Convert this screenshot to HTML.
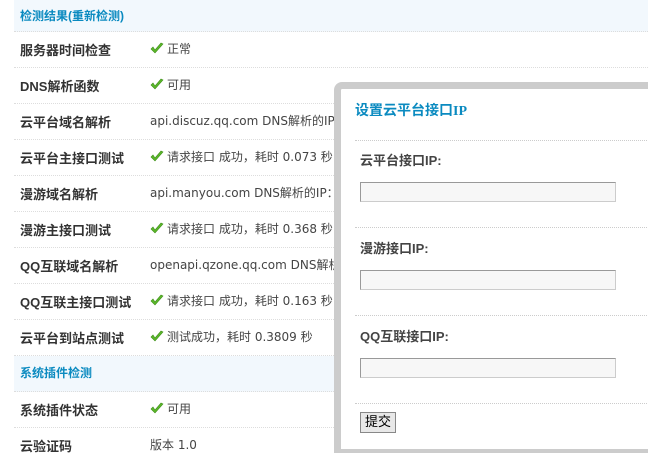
<!DOCTYPE html>
<html><head><meta charset="utf-8"><style>
body{margin:0;width:648px;height:453px;overflow:hidden;background:#fff;font-family:"DejaVu Sans","Noto Sans CJK SC",sans-serif;font-size:12px;color:#333;position:relative}
.row{position:absolute;left:14px;width:634px;height:35px;border-bottom:1px dotted #ddd}
.hd{background:#f2f8fd;color:#0a8ac0;font-weight:bold}
.l{position:absolute;left:6px;top:8px;font-weight:bold;font-family:"Liberation Sans","Noto Sans CJK SC",sans-serif;font-size:13px}
.hd .l{font-size:12px}
.v{position:absolute;left:136px;top:8px;white-space:nowrap;color:#444}
.ck{display:inline-block;width:14px;height:12px;vertical-align:-1px;margin-right:3px}
#dlg{position:absolute;left:334px;top:82px;width:330px;height:360px;background:#fff;border:7px solid #ccc;border-right:none;border-bottom-width:4px;border-top-left-radius:8px}
.t{position:absolute;left:14px;top:11px;color:#0a8ac0;font-weight:bold;font-size:14px;font-family:"Liberation Serif","Noto Sans CJK SC",serif}
.dl{position:absolute;left:14px;width:300px;border-top:1px dotted #ccc}
.lb{position:absolute;left:19px;font-weight:bold;font-size:13px;font-family:"Liberation Sans","Noto Sans CJK SC",sans-serif;color:#444}
.in{position:absolute;left:19px;width:254px;height:18px;border:1px solid #999;border-right-color:#ccc;border-bottom-color:#ccc;background:#f7f7f7}
.bt{position:absolute;left:19px;top:323px;width:34px;height:19px;background:#e8e8e8;border:1px solid #888;font-size:13px;text-align:center;line-height:19px;color:#000}
</style></head><body>
<svg width="0" height="0" style="position:absolute"><defs><symbol id="c" viewBox="0 0 14 12"><path d="M1 7 L5 11 L13 2 L11 1 L5 8 L3 5 Z" fill="#5cb82a" stroke="#3e8f1a" stroke-width=".6"/></symbol></defs></svg>
<div class="row hd" style="top:0;height:31px"><span class="l" style="top:7px">检测结果(重新检测)</span></div>
<div class="row" style="top:32px"><span class="l">服务器时间检查</span><span class="v"><svg class="ck"><use href="#c"/></svg>正常</span></div>
<div class="row" style="top:68px"><span class="l">DNS解析函数</span><span class="v"><svg class="ck"><use href="#c"/></svg>可用</span></div>
<div class="row" style="top:104px"><span class="l">云平台域名解析</span><span class="v">api.discuz.qq.com DNS解析的IP</span></div>
<div class="row" style="top:140px"><span class="l">云平台主接口测试</span><span class="v"><svg class="ck"><use href="#c"/></svg>请求接口 成功，耗时 0.073 秒</span></div>
<div class="row" style="top:176px"><span class="l">漫游域名解析</span><span class="v">api.manyou.com DNS解析的IP：</span></div>
<div class="row" style="top:212px"><span class="l">漫游主接口测试</span><span class="v"><svg class="ck"><use href="#c"/></svg>请求接口 成功，耗时 0.368 秒</span></div>
<div class="row" style="top:248px"><span class="l">QQ互联域名解析</span><span class="v">openapi.qzone.qq.com DNS解析</span></div>
<div class="row" style="top:284px"><span class="l">QQ互联主接口测试</span><span class="v"><svg class="ck"><use href="#c"/></svg>请求接口 成功，耗时 0.163 秒</span></div>
<div class="row" style="top:320px"><span class="l">云平台到站点测试</span><span class="v"><svg class="ck"><use href="#c"/></svg>测试成功，耗时 0.3809 秒</span></div>
<div class="row hd" style="top:356px"><span class="l">系统插件检测</span></div>
<div class="row" style="top:392px"><span class="l">系统插件状态</span><span class="v"><svg class="ck"><use href="#c"/></svg>可用</span></div>
<div class="row" style="top:428px;border:none"><span class="l">云验证码</span><span class="v">版本 1.0</span></div>
<div id="dlg">
<div class="t">设置云平台接口IP</div>
<div class="dl" style="top:51px"></div>
<div class="lb" style="top:61px">云平台接口IP:</div>
<div class="in" style="top:93px"></div>
<div class="dl" style="top:138px"></div>
<div class="lb" style="top:149px">漫游接口IP:</div>
<div class="in" style="top:181px"></div>
<div class="dl" style="top:226px"></div>
<div class="lb" style="top:237px">QQ互联接口IP:</div>
<div class="in" style="top:269px"></div>
<div class="dl" style="top:314px"></div>
<div class="bt">提交</div>
</div>
</body></html>
